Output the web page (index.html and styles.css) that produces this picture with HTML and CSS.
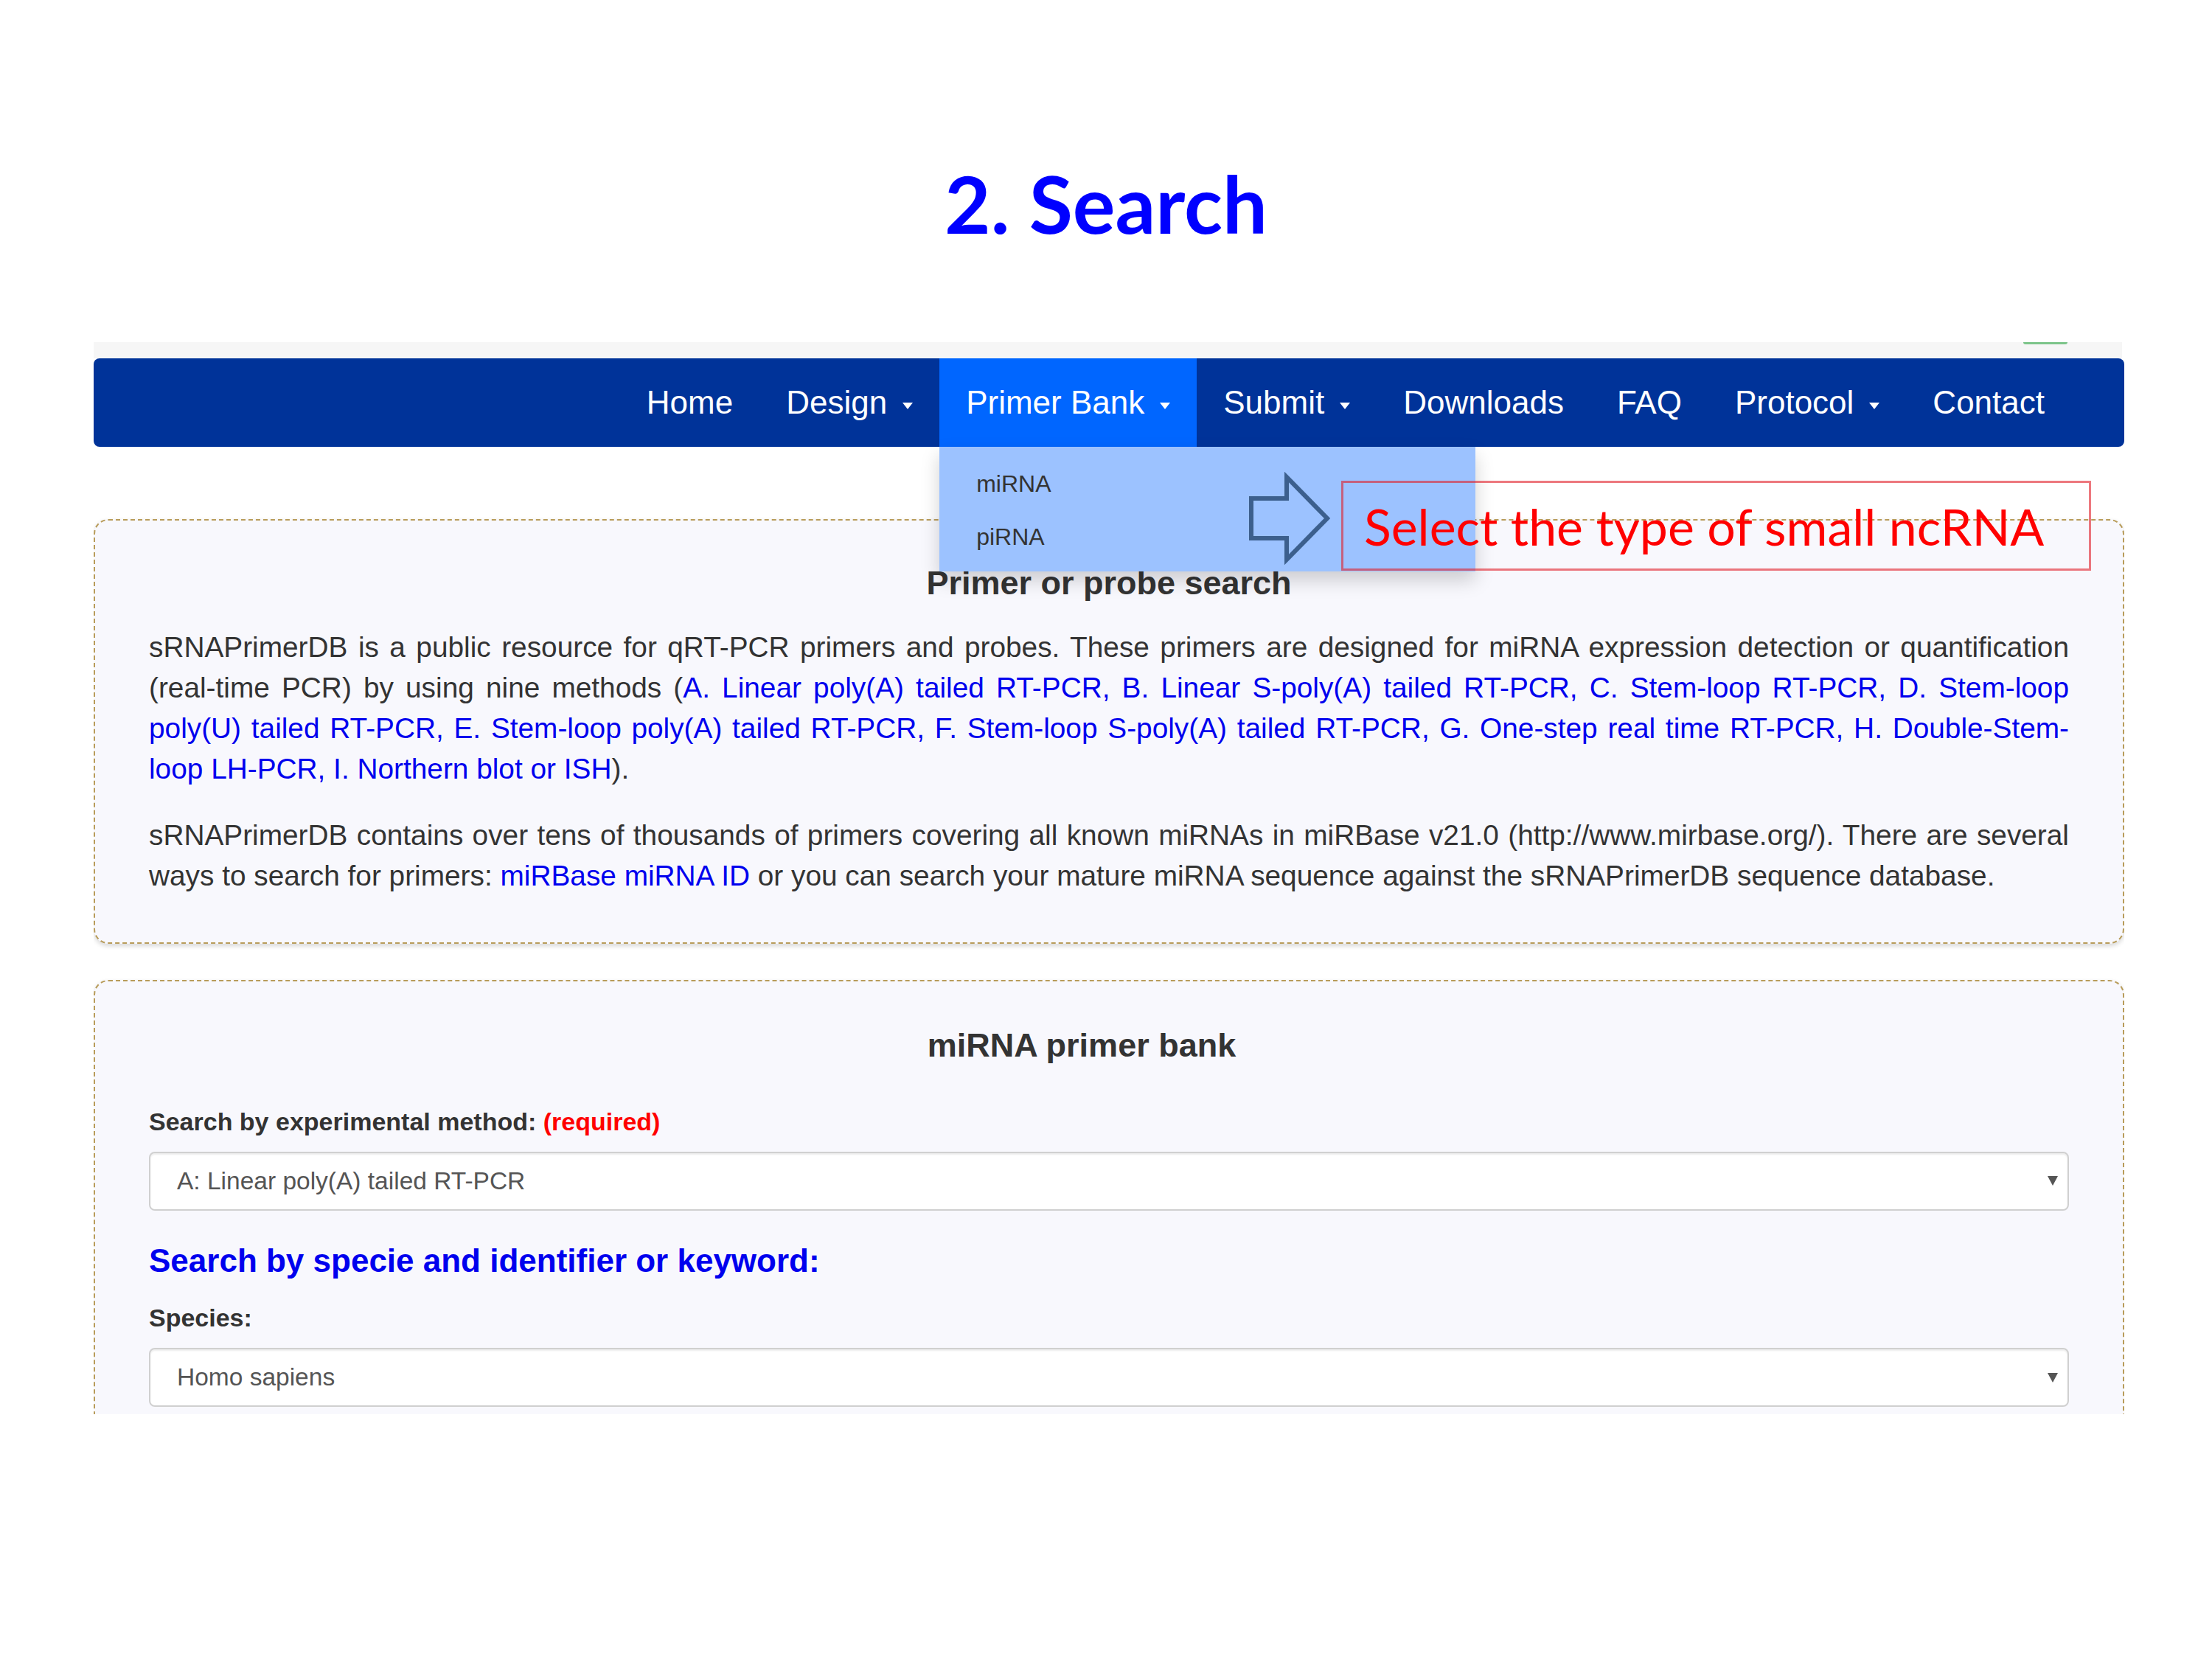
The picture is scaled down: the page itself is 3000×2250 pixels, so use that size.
FILE: index.html
```html
<!DOCTYPE html>
<html lang="en">
<head>
<meta charset="utf-8">
<title>2. Search</title>
<link rel="stylesheet" href="styles.css">
</head>
<body>
<div class="slide">
  <h1 class="title">2. Search</h1>

  <div class="shot">
    <div class="strip"><span class="blob"></span></div>
    <nav class="navbar">
      <ul class="nav">
        <li><a href="#">Home</a></li>
        <li><a href="#">Design<span class="caret"></span></a></li>
        <li class="active"><a href="#">Primer Bank<span class="caret"></span></a>
          <ul class="dropdown">
            <li>miRNA</li>
            <li>piRNA</li>
          </ul>
        </li>
        <li><a href="#">Submit<span class="caret"></span></a></li>
        <li><a href="#">Downloads</a></li>
        <li><a href="#">FAQ</a></li>
        <li><a href="#">Protocol<span class="caret"></span></a></li>
        <li><a href="#">Contact</a></li>
      </ul>
    </nav>

    <div class="content">
      <section class="panel panel-intro">
        <h3 class="panel-title">Primer or probe search</h3>
        <p>sRNAPrimerDB is a public resource for qRT-PCR primers and probes. These primers are designed for miRNA expression detection or quantification (real-time PCR) by using nine methods (<a href="#">A. Linear poly(A) tailed RT-PCR, B. Linear S-poly(A) tailed RT-PCR, C. Stem-loop RT-PCR, D. Stem-loop poly(U) tailed RT-PCR, E. Stem-loop poly(A) tailed RT-PCR, F. Stem-loop S-poly(A) tailed RT-PCR, G. One-step real time RT-PCR, H. Double-Stem-loop LH-PCR, I. Northern blot or ISH</a>).</p>
        <p>sRNAPrimerDB contains over tens of thousands of primers covering all known miRNAs in miRBase v21.0 (http://www.mirbase.org/). There are several ways to search for primers: <a href="#">miRBase miRNA ID</a> or you can search your mature miRNA sequence against the sRNAPrimerDB sequence database.</p>
      </section>

      <section class="panel panel-bank">
        <h3 class="panel-title bank-title">miRNA primer bank</h3>
        <div class="label">Search by experimental method: <span class="req">(required)</span></div>
        <div class="select"><span>A: Linear poly(A) tailed RT-PCR</span><span class="tri"></span></div>
        <h4 class="blue-head">Search by specie and identifier or keyword:</h4>
        <div class="label species">Species:</div>
        <div class="select"><span>Homo sapiens</span><span class="tri"></span></div>
      </section>
    </div>
  </div>

  <svg class="arrow" width="120" height="130" viewBox="0 0 120 130">
    <polygon points="7,36 55,36 55,7 110,63 55,119 55,90 7,90" fill="none" stroke="#3c5f8d" stroke-width="6" stroke-linejoin="miter"/>
  </svg>
  <div class="callout">Select the type of small ncRNA</div>
</div>
</body>
</html>
```

FILE: styles.css
```css
html, body {
  margin: 0;
  padding: 0;
  background: #ffffff;
}

.slide {
  position: relative;
  width: 3000px;
  height: 2250px;
  overflow: hidden;
  background: #ffffff;
}

.title {
  margin: 0;
  padding-top: 211px;
  font-family: Lato, "Open Sans", sans-serif;
  font-weight: 700;
  font-size: 108px;
  line-height: 1.2;
  color: #0000ff;
  text-align: center;
}

/* embedded web page screenshot */
.shot {
  margin: 123px 0 0 127px;
  width: 2754px;
  height: 1454px;
  overflow: hidden;
  font-family: "Liberation Sans", Arial, sans-serif;
  color: #333333;
}

.strip {
  height: 22px;
  margin-right: 3px;
  background: #f6f6f6;
  display: flex;
  justify-content: flex-end;
  padding-right: 74px;
}

.blob {
  width: 60px;
  height: 3px;
  border-radius: 0 0 30px 30px;
  background: #7cc48a;
}

.navbar {
  height: 120px;
  background: #003399;
  border-radius: 8px;
  display: flex;
  justify-content: flex-end;
  padding-right: 72px;
}

.nav {
  list-style: none;
  margin: 0;
  padding: 0;
  display: flex;
}

.nav > li {
  position: relative;
}

.nav > li > a {
  display: flex;
  align-items: center;
  height: 120px;
  padding: 0 36px;
  font-size: 44px;
  color: #ffffff;
  text-decoration: none;
}

.nav > li.active > a {
  background: #0066ff;
}

.caret {
  display: inline-block;
  width: 0;
  height: 0;
  margin-left: 21px;
  margin-top: 10px;
  border-top: 9px solid #ffffff;
  border-left: 7.5px solid transparent;
  border-right: 7.5px solid transparent;
}

.dropdown {
  position: absolute;
  top: 100%;
  left: 0;
  z-index: 5;
  width: 727px;
  margin: 0;
  padding: 14px 0 11px;
  list-style: none;
  background: #9cc2ff;
  box-shadow: 0 12px 24px rgba(0, 0, 0, 0.18);
}

.dropdown li {
  padding-left: 50px;
  font-size: 32px;
  line-height: 72px;
  color: #333333;
}

.content {
  padding-top: 98px;
}

.panel {
  background: #f8f8fd;
  border: 2px dashed #b89c5a;
  border-radius: 20px;
  box-shadow: 0 3px 6px rgba(0, 0, 0, 0.16);
  padding: 60px 73px 63px;
}

.panel-bank {
  margin-top: 49px;
  padding-top: 62px;
}

.panel-title {
  margin: 0 0 34.5px;
  font-size: 45px;
  font-weight: 700;
  line-height: 1.1;
  text-align: center;
  color: #333333;
}

.bank-title {
  margin-bottom: 54.5px;
  padding-right: 74px;
}

.panel p {
  margin: 0 0 35px;
  font-size: 38.8px;
  line-height: 55px;
  text-align: justify;
}

.panel p:last-child {
  margin-bottom: 0;
}

.panel a {
  color: #0000ee;
  text-decoration: none;
}

.label {
  font-size: 34px;
  font-weight: 700;
  line-height: 1.42857;
  margin-bottom: 16.4px;
}

.req {
  color: #ff0000;
}

.select {
  box-sizing: border-box;
  height: 80px;
  display: flex;
  align-items: center;
  justify-content: space-between;
  padding: 0 13px 0 36px;
  background: #ffffff;
  border: 2px solid #d0d0d0;
  border-radius: 8px;
  box-shadow: inset 0 2px 2px rgba(0, 0, 0, 0.075);
  font-size: 33.5px;
  color: #555555;
}

.tri {
  width: 0;
  height: 0;
  border-top: 13px solid #555555;
  border-left: 7px solid transparent;
  border-right: 7px solid transparent;
}

.blue-head {
  margin: 44.5px 0 29px;
  font-size: 44px;
  font-weight: 700;
  line-height: 1.1;
  color: #0000ee;
}

/* annotations laid over the screenshot */
.arrow {
  position: absolute;
  left: 1690px;
  top: 640px;
  z-index: 8;
}

.callout {
  position: absolute;
  left: 1819px;
  top: 652px;
  z-index: 9;
  box-sizing: border-box;
  width: 1017px;
  height: 122px;
  border: 3px solid rgba(225, 30, 40, 0.6);
  display: flex;
  align-items: center;
  padding-left: 28px;
  font-family: Lato, "Open Sans", sans-serif;
  font-size: 68px;
  color: #ff0000;
  white-space: nowrap;
}
```
